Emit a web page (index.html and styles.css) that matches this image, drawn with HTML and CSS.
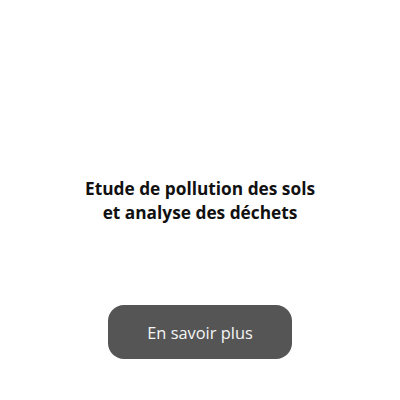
FILE: index.html
```html
<!DOCTYPE html>
<html lang="fr">
<head>
    <meta charset="UTF-8">
    <meta name="viewport" content="width=device-width, initial-scale=1.0">
    <title>Etude de pollution des sols</title>
    <link rel="stylesheet" href="styles.css">
</head>
<body>
    <main class="service">
        <h2 class="service-title">Etude de pollution des sols<br>et analyse des déchets</h2>
        <a class="service-btn" href="#">En savoir plus</a>
    </main>
</body>
</html>
```

FILE: styles.css
```css
/* Global Styles */
* {
    margin: 0;
    padding: 0;
    box-sizing: border-box;
}

body {
    font-family: 'Open Sans', sans-serif;
    background-color: #fff;
    color: #111;
}

.service {
    display: flex;
    flex-direction: column;
    align-items: center;
    padding-top: 177px;
    text-align: center;
}

.service-title {
    font-size: 17.3px;
    font-weight: 700;
    line-height: 24px;
}

.service-btn {
    display: flex;
    align-items: center;
    justify-content: center;
    width: 184px;
    height: 54px;
    margin-top: 80px;
    background-color: #555;
    color: #f5f5f5;
    font-size: 16.4px;
    text-decoration: none;
    border-radius: 16px;
}
```
